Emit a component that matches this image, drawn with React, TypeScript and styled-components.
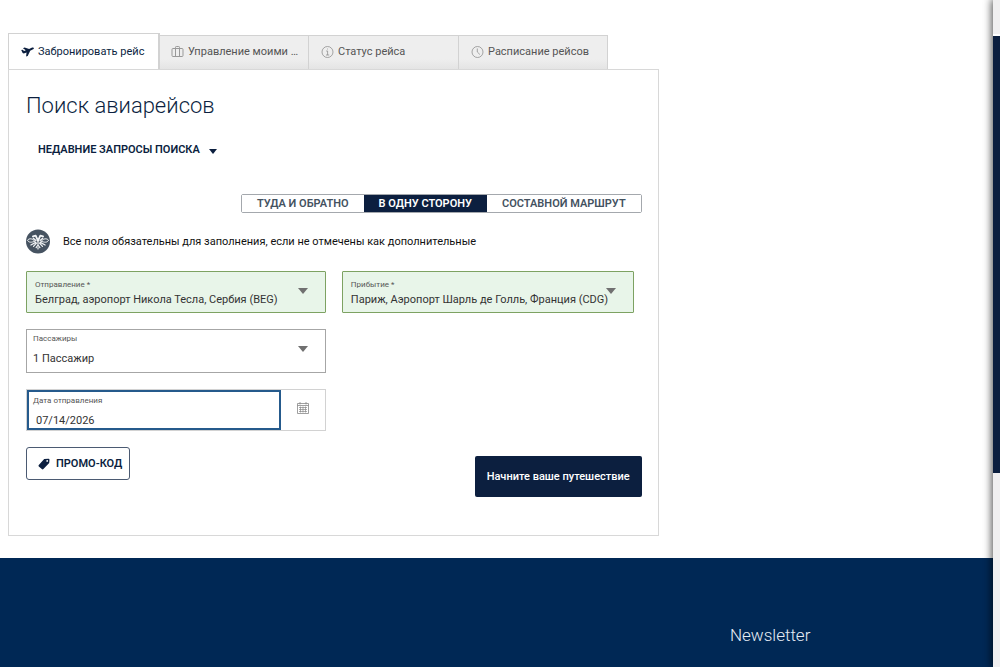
import React, { useState } from "react";
import styled, { createGlobalStyle, css } from "styled-components";

const navy = "#0c1f3f";

const GlobalStyle = createGlobalStyle`
  *, *::before, *::after { box-sizing: border-box; }
  body { margin: 0; background: #fff; color: #222; font: 11px/16px Roboto, "Liberation Sans", sans-serif; }
  button, input, select { font-family: inherit; margin: 0; }
  svg { flex: none; }
`;

const Page = styled.div`
  display: flex;
  flex-direction: column;
  min-height: 100vh;
`;

const Main = styled.main`
  display: grid;
  grid-template-columns: 2fr 1fr;
  gap: 8px;
  padding: 33px 8px 22px;
`;

const Tabs = styled.div`
  display: grid;
  grid-template-columns: repeat(4, minmax(0, 1fr));
  align-items: end;
  max-width: 600px;
`;

const Tab = styled.button<{ $active: boolean }>`
  display: flex;
  align-items: center;
  gap: 4px;
  height: 34px;
  padding: 0 4px 1px 12px;
  border: 1px solid #d2d2d2;
  border-width: 1px 0 0 1px;
  background: linear-gradient(#eee 70%, #e4e4e4);
  color: #555;
  font-size: 11px;
  line-height: 16px;
  cursor: pointer;
  &:last-child {
    border-right-width: 1px;
  }
  ${(p) =>
    p.$active &&
    css`
      position: relative;
      height: 37px;
      margin-bottom: -1px;
      padding-bottom: 0;
      background: #fff;
      color: ${navy};
      box-shadow: 2px 0 0 #d2d2d2;
      clip-path: inset(0 -2px 1px 0);
    `}
`;

const TabLabel = styled.span`
  white-space: nowrap;
`;

const Panel = styled.form`
  display: flex;
  flex-direction: column;
  align-items: stretch;
  padding: 20px 16px 38px 17px;
  border: 1px solid #d8d8d8;
`;

const Title = styled.h1`
  margin: 0;
  color: ${navy};
  font-size: 22px;
  font-weight: 300;
  line-height: 32px;
`;

const RecentButton = styled.button`
  display: flex;
  align-items: center;
  align-self: flex-start;
  gap: 9px;
  height: 24px;
  margin: 16px 0 32px;
  padding: 0 12px 2px;
  border: 0;
  background: none;
  color: ${navy};
  font-size: 11px;
  font-weight: 600;
  cursor: pointer;
`;

const Caret = styled.span`
  margin-top: 4px;
  border: 4px solid transparent;
  border-top: 5px solid currentColor;
  border-bottom: 0;
`;

const Segments = styled.div`
  display: flex;
  align-self: flex-end;
  height: 19px;
  border: 1px solid #a4a8ad;
  border-radius: 2px;
`;

const Segment = styled.button<{ $active: boolean }>`
  padding: 0 15px;
  border: 0;
  background: ${(p) => (p.$active ? navy : "#fff")};
  color: ${(p) => (p.$active ? "#fff" : "#44525f")};
  font-size: 11px;
  font-weight: 600;
  line-height: 17px;
  cursor: pointer;
`;

const Notice = styled.p`
  display: flex;
  align-items: center;
  gap: 12px;
  margin: 16px 0 17px;
  color: #111;
`;

const Fields = styled.div`
  display: grid;
  grid-template-columns: 1fr 1fr;
  gap: 16px;
`;

const Field = styled.div<{ $filled?: boolean; $inset?: boolean }>`
  position: relative;
  height: ${(p) => (p.$filled ? 42 : 44)}px;
  margin-right: ${(p) => (p.$inset ? 8 : 0)}px;
  border: 1px solid ${(p) => (p.$filled ? "#7da262" : "#a6a6a6")};
  border-radius: ${(p) => (p.$filled ? 1 : 0)}px;
  background: ${(p) => (p.$filled ? "#e8f5e9" : "#fff")};
`;

const FieldLabel = styled.label<{ $filled?: boolean }>`
  position: absolute;
  top: ${(p) => (p.$filled ? 7 : 3)}px;
  left: ${(p) => (p.$filled ? 8 : 6)}px;
  color: #555;
  font-size: 8px;
  line-height: 12px;
  pointer-events: none;
`;

const control = css`
  display: block;
  width: 100%;
  height: 100%;
  border: 0;
  border-radius: 0;
  background: transparent;
  color: #333;
  font-size: 11px;
  line-height: 16px;
  outline: 0;
`;

const AirportInput = styled.input`
  ${control}
  padding: 14px 8px 0;
`;

const PassengerSelect = styled.select`
  ${control}
  padding: 16px 6px 0;
  appearance: none;
`;

const FieldArrow = styled.span`
  position: absolute;
  top: 16px;
  right: 17px;
  border: 5px solid transparent;
  border-top: 6px solid #707070;
  border-bottom: 0;
  pointer-events: none;
`;

const DateRow = styled.div`
  grid-column: 1;
  display: flex;
  height: 42px;
  border: 1px solid #d2d2d2;
`;

const DateField = styled.div`
  position: relative;
  flex: 1;
  border: 2px solid #255a8c;
`;

const DateInput = styled.input`
  ${control}
  padding: 20px 7px 0;
`;

const DateLabel = styled(FieldLabel)`
  left: 4px;
`;

const CalendarButton = styled.button`
  display: grid;
  place-items: center;
  width: 44px;
  padding: 0 0 4px;
  border: 0;
  background: #fff;
  cursor: pointer;
`;

const Actions = styled.div`
  display: flex;
  align-items: flex-start;
  justify-content: space-between;
  margin-top: 16px;
`;

const PromoButton = styled.button`
  display: flex;
  align-items: center;
  gap: 6px;
  height: 33px;
  padding: 0 7px 0 11px;
  border: 1px solid #4b5a72;
  border-radius: 3px;
  background: #fff;
  color: ${navy};
  font-size: 11px;
  font-weight: 600;
  cursor: pointer;
`;

const SubmitButton = styled.button`
  height: 41px;
  margin-top: 9px;
  padding: 0 12px;
  border: 0;
  border-radius: 2px;
  background: ${navy};
  color: #fff;
  font-size: 11px;
  font-weight: 500;
  cursor: pointer;
`;

const Footer = styled.footer`
  flex: 1;
  padding: 65px 16px 20px 73%;
  background: #002855;
`;

const FooterTitle = styled.h2`
  margin: 0;
  color: #e6edf5;
  font-size: 17px;
  font-weight: 300;
  line-height: 24px;
`;

const Drawer = styled.aside`
  position: fixed;
  top: 0;
  right: 0;
  bottom: 0;
  width: 7px;
  padding-top: 34px;
  background: #f0eff0;
  box-shadow: 0 0 8px 1px rgba(0, 0, 0, 0.75);
`;

const DrawerBody = styled.div`
  height: 439px;
  border-top: 2px solid #fff;
  background: ${navy};
`;

const PlaneIcon = () => (
  <svg width="13" height="13" viewBox="0 0 12 12" fill={navy} aria-hidden="true">
    <path d="M.2 3.8 1.4 3.5 2.9 4.6 4.4 4 1.8 2 3.3 1.3 7.5 2.7 9.8 1.6C10.9 1.1 11.8 1.3 11.9 1.8 12 2.4 11.4 2.9 10.7 3.3L8.5 4.4 6.2 9.2 4.7 9.8 5.1 6.1 2.6 6.9 1.5 6.4Z" />
  </svg>
);

const LuggageIcon = () => (
  <svg width="13" height="13" viewBox="0 0 13 13" fill="none" stroke="#999" aria-hidden="true">
    <rect x="1" y="2.5" width="11" height="8" rx="1" />
    <path d="M4.5 10.5V1.3Q4.5.5 5.3.5H7.7Q8.5.5 8.5 1.3V10.5" />
  </svg>
);

const InfoIcon = () => (
  <svg width="13" height="13" viewBox="0 0 13 13" fill="none" stroke="#8f8f8f" strokeWidth=".8" aria-hidden="true">
    <circle cx="6.5" cy="6" r="5.5" />
    <path d="M5.2 5H6.6V9M5 9H8.2M6.1 3H6.9" />
  </svg>
);

const ClockIcon = () => (
  <svg width="13" height="13" viewBox="0 0 13 13" fill="none" stroke="#8f8f8f" strokeWidth=".8" aria-hidden="true">
    <circle cx="6.5" cy="6" r="5.5" />
    <path d="M6.3 2.5V6L8.9 8.5" />
  </svg>
);

const TagIcon = () => (
  <svg width="12" height="12" viewBox="0 0 12 12" fill={navy} aria-hidden="true">
    <path
      fillRule="evenodd"
      d="M6.2 1.1 10.5.8Q11.5.8 11.5 1.8L11.2 5 5.4 11.1Q4.6 11.8 3.8 11L.8 8.5Q.1 7.8.8 7ZM9.2 2A.9.9 0 1 0 9.2 3.8.9.9 0 1 0 9.2 2Z"
    />
  </svg>
);

const CalendarIcon = () => (
  <svg width="12" height="12" viewBox="0 0 12 12" fill="none" stroke="#888" strokeWidth=".8" aria-hidden="true">
    <path d="M.5 1.5H11.5V11.5H.5ZM.5 3.5H11.5M3 0V2.5M9 0V2.5" />
    <path d="M2 5.5H10M2 7.5H10M2 9.5H10M3.5 4.5V10.5M6 4.5V10.5M8.5 4.5V10.5" strokeWidth=".7" />
  </svg>
);

const EmblemIcon = () => (
  <svg width="25" height="25" viewBox="0 0 25 25" aria-hidden="true">
    <circle cx="12" cy="12.5" r="12" fill="#465361" />
    <g transform="translate(-.5 0)" fill="none" stroke="#f2f4f6" strokeLinecap="round" strokeLinejoin="round">
      <path d="M12.5 11.8 10.2 6.6 7.4 7.4M12.5 11.8 14.8 6.6 17.6 7.4" strokeWidth="1.8" />
      <path d="M10.4 11.6 7.8 9.2M14.6 11.6 17.2 9.2" strokeWidth="1.3" />
      <path d="M9.2 12.2C7.6 9.4 3.6 9 2 11.2 3 13.8 6.4 13.6 9.2 12.2ZM15.8 12.2C17.4 9.4 21.4 9 23 11.2 22 13.8 18.6 13.6 15.8 12.2Z" strokeWidth="1" />
      <path d="M10.2 13.4 5.4 16M11 14.2 8 17.4M14.8 13.4 19.6 16M14 14.2 17 17.4" strokeWidth="1.2" />
      <path d="M12.5 12.5V16M12.5 16 10.6 18.6M12.5 16 14.4 18.6M12.5 18.6V20" strokeWidth="1.2" />
    </g>
  </svg>
);

const tabs = [
  { label: "Забронировать рейс", Icon: PlaneIcon },
  { label: "Управление моими …", Icon: LuggageIcon },
  { label: "Статус рейса", Icon: InfoIcon },
  { label: "Расписание рейсов", Icon: ClockIcon },
];

const trips = ["ТУДА И ОБРАТНО", "В ОДНУ СТОРОНУ", "СОСТАВНОЙ МАРШРУТ"];

export default function App() {
  const [tab, setTab] = useState(0);
  const [trip, setTrip] = useState(1);

  return (
    <>
      <GlobalStyle />
      <Page>
        <Main>
          <section>
            <Tabs role="tablist">
              {tabs.map(({ label, Icon }, i) => (
                <Tab key={label} type="button" role="tab" aria-selected={i === tab} $active={i === tab} onClick={() => setTab(i)}>
                  <Icon />
                  <TabLabel>{label}</TabLabel>
                </Tab>
              ))}
            </Tabs>
            <Panel onSubmit={(e) => e.preventDefault()}>
              <Title>Поиск авиарейсов</Title>
              <RecentButton type="button">
                НЕДАВНИЕ ЗАПРОСЫ ПОИСКА
                <Caret />
              </RecentButton>
              <Segments>
                {trips.map((label, i) => (
                  <Segment key={label} type="button" aria-pressed={i === trip} $active={i === trip} onClick={() => setTrip(i)}>
                    {label}
                  </Segment>
                ))}
              </Segments>
              <Notice>
                <EmblemIcon />
                Все поля обязательны для заполнения, если не отмечены как дополнительные
              </Notice>
              <Fields>
                <Field $filled>
                  <FieldLabel $filled htmlFor="origin">Отправление *</FieldLabel>
                  <AirportInput id="origin" defaultValue="Белград, аэропорт Никола Тесла, Сербия (BEG)" />
                  <FieldArrow />
                </Field>
                <Field $filled $inset>
                  <FieldLabel $filled htmlFor="destination">Прибытие *</FieldLabel>
                  <AirportInput id="destination" defaultValue="Париж, Аэропорт Шарль де Голль, Франция (CDG)" />
                  <FieldArrow />
                </Field>
                <Field>
                  <FieldLabel htmlFor="passengers">Пассажиры</FieldLabel>
                  <PassengerSelect id="passengers">
                    <option>1 Пассажир</option>
                  </PassengerSelect>
                  <FieldArrow />
                </Field>
                <DateRow>
                  <DateField>
                    <DateLabel htmlFor="departure">Дата отправления</DateLabel>
                    <DateInput id="departure" defaultValue="07/14/2026" />
                  </DateField>
                  <CalendarButton type="button" aria-label="Календарь">
                    <CalendarIcon />
                  </CalendarButton>
                </DateRow>
              </Fields>
              <Actions>
                <PromoButton type="button">
                  <TagIcon />
                  ПРОМО-КОД
                </PromoButton>
                <SubmitButton type="submit">Начните ваше путешествие</SubmitButton>
              </Actions>
            </Panel>
          </section>
        </Main>
        <Footer>
          <FooterTitle>Newsletter</FooterTitle>
        </Footer>
      </Page>
      <Drawer>
        <DrawerBody />
      </Drawer>
    </>
  );
}
